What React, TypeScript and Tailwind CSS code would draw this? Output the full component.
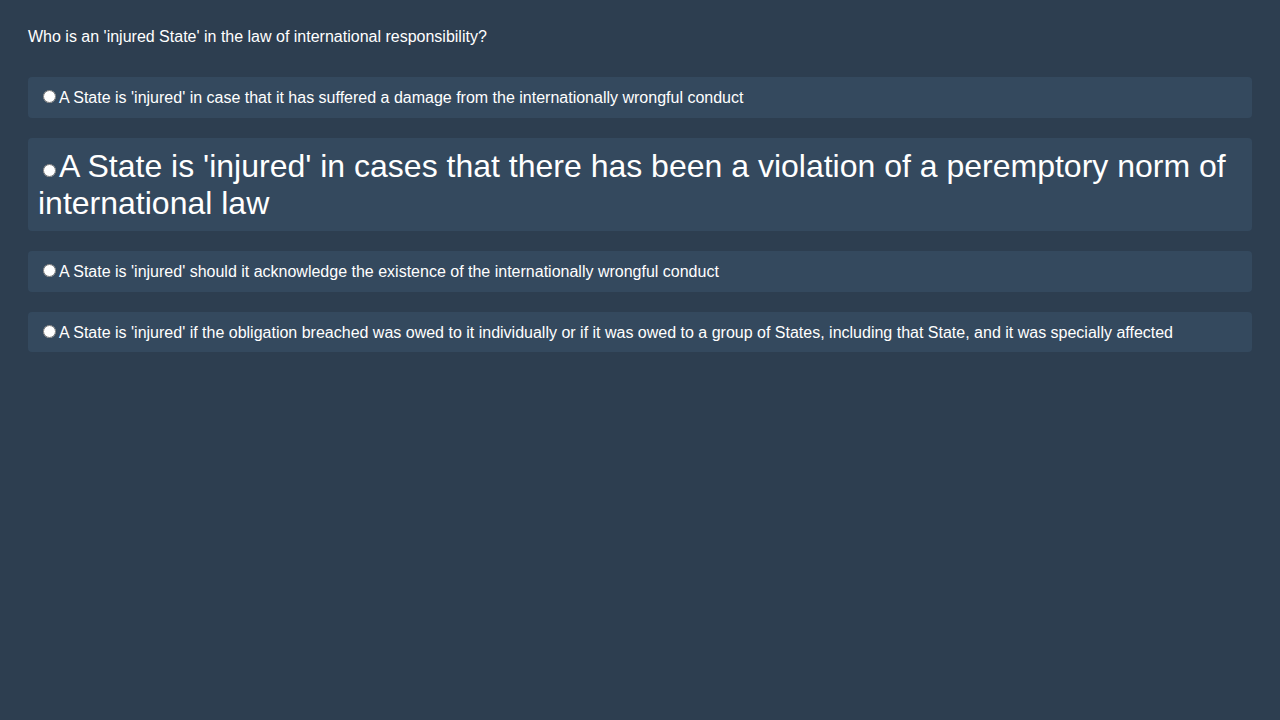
const options = [
  { text: "A State is 'injured' in case that it has suffered a damage from the internationally wrongful conduct", big: false },
  { text: "A State is 'injured' in cases that there has been a violation of a peremptory norm of international law", big: true },
  { text: "A State is 'injured' should it acknowledge the existence of the internationally wrongful conduct", big: false },
  {
    text: "A State is 'injured' if the obligation breached was owed to it individually or if it was owed to a group of States, including that State, and it was specially affected",
    big: false,
  },
]

export default function App() {
  return (
    <div className="min-h-screen bg-[#2d3e50] p-7 leading-[1.15] text-white font-['Liberation_Sans',Arial,sans-serif]">
      <p className="text-base leading-[1.15]">Who is an 'injured State' in the law of international responsibility?</p>

      <div className="mt-[31px] flex flex-col gap-5">
        {options.map((opt, i) => (
          <label
            key={i}
            className={`block rounded bg-[#34495e] p-2.5 leading-[1.15] ${opt.big ? "text-[32px]" : "text-base"}`}
          >
            <input type="radio" name="answer" className="mt-[3px] mr-[3px] ml-[5px]" />
            {opt.text}
          </label>
        ))}
      </div>
    </div>
  )
}
